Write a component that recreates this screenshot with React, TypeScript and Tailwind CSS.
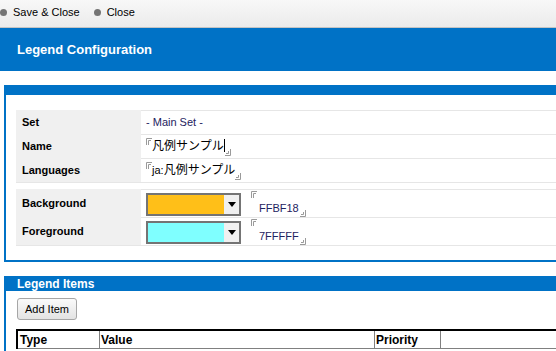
const BLUE = "bg-[#0072c6]";

type ToolItem = { label: string };

const toolItems: ToolItem[] = [{ label: "Save & Close" }, { label: "Close" }];

function OpenMark() {
  return (
    <svg width="6" height="7" viewBox="0 0 6 7" className="shrink-0">
      <path d="M0.5 7V0.5H6" fill="none" stroke="#9a9a9a" strokeWidth="1" />
      <path d="M2.5 7V2.5H5" fill="none" stroke="#9a9a9a" strokeWidth="1" />
    </svg>
  );
}

function CloseMark() {
  return (
    <svg width="6" height="7" viewBox="0 0 6 7" className="shrink-0">
      <path d="M0 6.5H5.5V0" fill="none" stroke="#9a9a9a" strokeWidth="1" />
      <path d="M1 4.5H3.5V2" fill="none" stroke="#9a9a9a" strokeWidth="1" />
    </svg>
  );
}

function LabelRow({
  label,
  children,
  height,
}: {
  label: string;
  children: React.ReactNode;
  height: string;
}) {
  return (
    <div className={`flex ${height}`}>
      <div className="w-[125px] shrink-0 bg-[#f0f0f0] pl-[6px] flex items-center font-bold text-[11px] text-black">
        {label}
      </div>
      <div className="flex-1 border-t border-[#e6e6e6] pl-[5px] flex items-center text-[11px] text-[#1e2260]">
        {children}
      </div>
    </div>
  );
}

function Marked({ children }: { children: React.ReactNode }) {
  return (
    <span className="inline-flex">
      <span className="self-start mt-[-1px]">
        <OpenMark />
      </span>
      <span className="leading-[15px] font-['Liberation_Sans','Noto_Sans_CJK_JP',sans-serif] text-[12px] text-black">
        {children}
      </span>
      <span className="self-end mb-[-2px]">
        <CloseMark />
      </span>
    </span>
  );
}

function ColorPicker({ color, hex }: { color: string; hex: string }) {
  return (
    <>
      <div className="flex h-[23px] w-[95px] border-2 border-[#747474] mt-[1px]">
        <div className="flex-1" style={{ backgroundColor: color }} />
        <div className="w-[15px] bg-[#f0f0f0] flex items-center justify-center">
          <svg width="8" height="5" viewBox="0 0 8 5">
            <polygon points="0,0 8,0 4,5" fill="#000" />
          </svg>
        </div>
      </div>
      <div className="ml-[10px] self-stretch flex flex-col">
        <div className="mt-[1px]">
          <OpenMark />
        </div>
        <div className="flex items-end pl-[8px] mt-[4px]">
          <span className="leading-[13px] text-[11px]">{hex}</span>
          <span className="mb-[-2px] ml-[1px]">
            <CloseMark />
          </span>
        </div>
      </div>
    </>
  );
}

export default function App() {
  return (
    <div className="w-[556px] h-[351px] overflow-hidden bg-white font-['Liberation_Sans',Arial,sans-serif] text-[11px] text-black">
      {/* toolbar */}
      <div className="h-[28px] border-b border-[#c4c4c4] bg-gradient-to-b from-[#f8f8f8] to-[#ebebeb] flex items-center gap-[14px] pb-[3px]">
        {toolItems.map((item) => (
          <div key={item.label} className="flex items-center gap-[6px]">
            <span className="w-[7px] h-[7px] rounded-full bg-[#747474]" />
            <span className="text-[11px]">{item.label}</span>
          </div>
        ))}
      </div>

      {/* page title */}
      <div className={`h-[43px] ${BLUE} flex items-center pl-[17px] text-white font-bold text-[13px]`}>
        Legend Configuration
      </div>

      {/* settings panel */}
      <div className="mt-[14px] ml-[4px] border-l-2 border-b-2 border-[#0072c6]">
        <div className={`h-[10px] ${BLUE}`} />
        <div className="pl-[10px] pt-[15px] pb-[14px]">
          <div className="border-b border-[#e6e6e6]">
            <LabelRow label="Set" height="h-[24px]">
              - Main Set -
            </LabelRow>
            <LabelRow label="Name" height="h-[24px]">
              <Marked>
                凡例サンプル
                <span className="inline-block w-px h-[13px] bg-black align-[-2px]" />
              </Marked>
            </LabelRow>
            <LabelRow label="Languages" height="h-[24px]">
              <Marked>
                <span className="text-[11px]">ja:</span>凡例サンプル{" "}
              </Marked>
            </LabelRow>
          </div>
          <div className="mt-[6px] border-b border-[#e6e6e6]">
            <LabelRow label="Background" height="h-[28px]">
              <ColorPicker color="#FFBF18" hex="FFBF18" />
            </LabelRow>
            <LabelRow label="Foreground" height="h-[28px]">
              <ColorPicker color="#7FFFFF" hex="7FFFFF" />
            </LabelRow>
          </div>
        </div>
      </div>

      {/* legend items panel */}
      <div className="mt-[14px] ml-[4px] border-l-2 border-[#0072c6] h-[100px]">
        <div className={`h-[15px] ${BLUE} pl-[11px] flex items-center text-white font-bold text-[12px]`}>
          Legend Items
        </div>
        <div className="pl-[10px] pt-[7px]">
          <button className="ml-[1px] h-[22px] w-[60px] rounded-[3px] border border-[#a6a6a6] bg-gradient-to-b from-[#fafafa] to-[#e3e3e3] text-[11px] text-black">
            Add Item
          </button>
          <div className="mt-[9px] border-t-2 border-l-2 border-black">
            <div className="flex h-[18px] border-b border-[#808080] font-bold text-[12px]">
              <div className="w-[82px] pl-[2px] border-r border-[#808080] flex items-center">Type</div>
              <div className="w-[275px] pl-[1px] border-r border-[#808080] flex items-center">Value</div>
              <div className="w-[66px] pl-[1px] border-r border-[#808080] flex items-center">Priority</div>
              <div className="flex-1" />
            </div>
          </div>
        </div>
      </div>
    </div>
  );
}
